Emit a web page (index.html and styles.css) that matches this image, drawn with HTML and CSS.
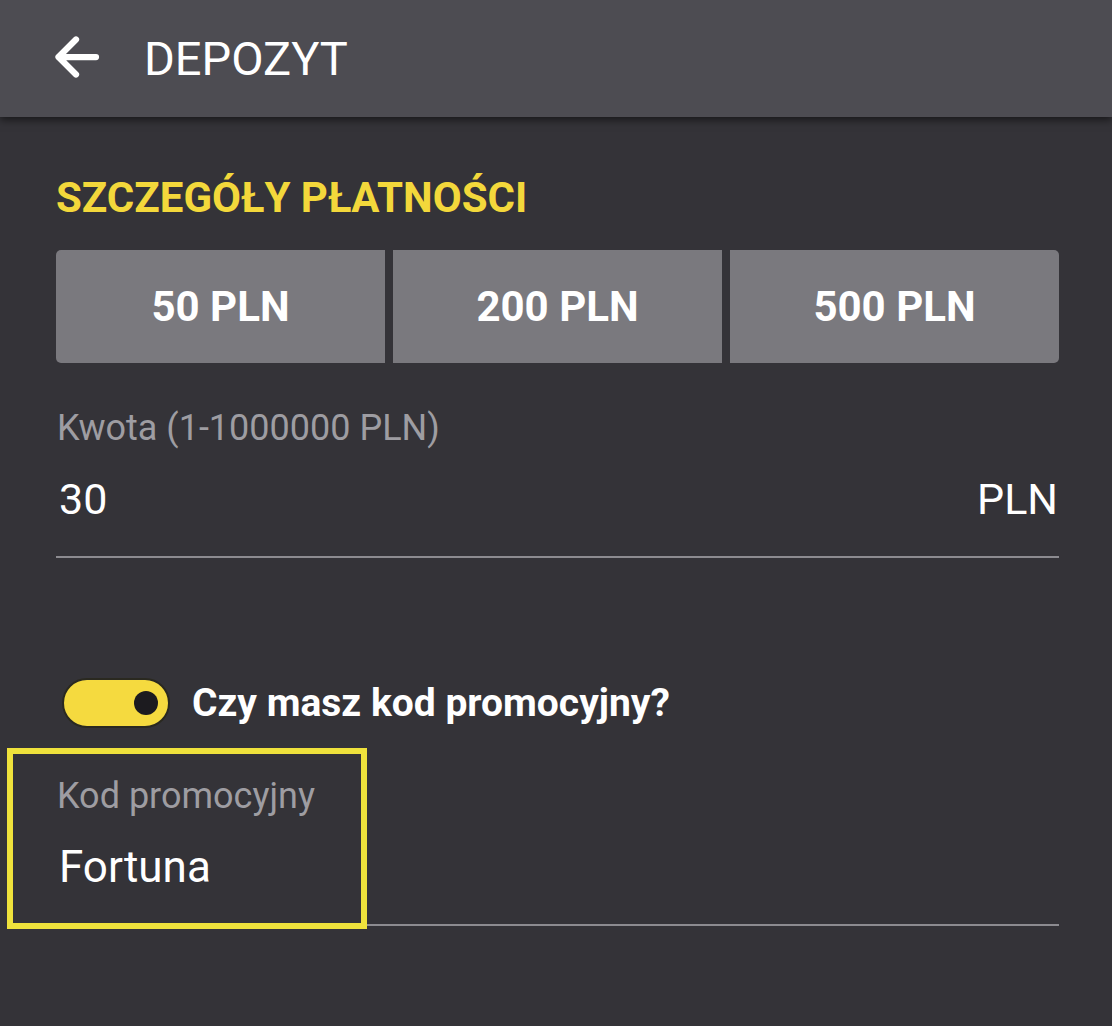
FILE: index.html
```html
<!DOCTYPE html>
<html lang="pl">
<head>
    <meta charset="UTF-8">
    <meta name="viewport" content="width=device-width, initial-scale=1.0">
    <title>Depozyt</title>
    <link rel="stylesheet" href="styles.css">
</head>
<body>
    <header class="toolbar">
        <svg class="back-icon" viewBox="0 0 24 24" width="60" height="60">
            <path d="M20 12H5 M12 5l-7 7 7 7" fill="none" stroke="#fff" stroke-width="2.5" stroke-linecap="round" stroke-linejoin="round"/>
        </svg>
        <h1 class="toolbar-title">DEPOZYT</h1>
    </header>

    <main class="content">
        <h2 class="section-title">SZCZEGÓŁY PŁATNOŚCI</h2>

        <div class="amount-buttons">
            <button class="amount-btn">50 PLN</button>
            <button class="amount-btn">200 PLN</button>
            <button class="amount-btn">500 PLN</button>
        </div>

        <div class="field">
            <label class="field-label">Kwota (1-1000000 PLN)</label>
            <div class="field-value">
                <span>30</span>
                <span>PLN</span>
            </div>
        </div>

        <div class="promo-toggle">
            <span class="switch"><span class="switch-knob"></span></span>
            <span class="promo-question">Czy masz kod promocyjny?</span>
        </div>

        <div class="field promo-field">
            <div class="highlight-box"></div>
            <label class="field-label">Kod promocyjny</label>
            <div class="field-value promo-value">
                <span>Fortuna</span>
            </div>
        </div>
    </main>
</body>
</html>
```

FILE: styles.css
```css
/* page */
body {
    margin: 0;
    font-family: Roboto, "Noto Sans", Arial, sans-serif;
    background-color: #343338;
    color: #fff;
    height: 1026px;
    overflow: hidden;
}

/* top bar */
.toolbar {
    height: 117px;
    display: flex;
    align-items: center;
    padding-left: 46px;
    gap: 38px;
    background-color: #4d4c52;
    box-shadow: 0 3px 8px rgba(0, 0, 0, 0.55);
    position: relative;
}

.back-icon {
    display: block;
    margin-top: -3px;
}

.toolbar-title {
    margin: 0;
    font-size: 47px;
    font-weight: 400;
    line-height: 1;
}

/* content */
.content {
    padding: 56px 53px 0 56px;
}

.section-title {
    margin: 0;
    color: #f3d83b;
    font-size: 42px;
    font-weight: 700;
    line-height: 50px;
}

.amount-buttons {
    display: flex;
    gap: 8px;
    margin-top: 27px;
    border-radius: 5px;
    overflow: hidden;
}

.amount-btn {
    flex: 1;
    height: 113px;
    border: none;
    background-color: #7a797e;
    color: #fff;
    font-family: inherit;
    font-size: 42px;
    font-weight: 700;
    padding: 0;
}

.field {
    margin-top: 43px;
    border-bottom: 2px solid #8c8b90;
    padding-bottom: 31px;
}

.field-label {
    display: block;
    font-size: 36px;
    line-height: 44px;
    color: #9e9da2;
    padding-left: 1px;
}

.field-value {
    display: flex;
    justify-content: space-between;
    margin-top: 23px;
    font-size: 43px;
    line-height: 52px;
    padding: 0 1px 0 3px;
}

.promo-value {
    font-size: 44px;
}

/* promo switch */
.promo-toggle {
    display: flex;
    align-items: center;
    gap: 22px;
    margin-top: 120px;
    padding-left: 6px;
}

.switch {
    width: 108px;
    height: 50px;
    box-sizing: border-box;
    border-radius: 25px;
    border: 2px solid #2a2920;
    background-color: #f5da3f;
    position: relative;
}

.switch-knob {
    position: absolute;
    right: 10px;
    top: 11px;
    width: 24px;
    height: 24px;
    border-radius: 50%;
    background-color: #1c1b1f;
}

.promo-question {
    font-size: 39px;
    font-weight: 700;
}

.promo-field {
    margin-top: 46px;
    position: relative;
}

/* annotation frame round the promo code */
.highlight-box {
    position: absolute;
    left: -49px;
    top: -26px;
    width: 348px;
    height: 169px;
    border: 6px solid #efe23c;
}
```
